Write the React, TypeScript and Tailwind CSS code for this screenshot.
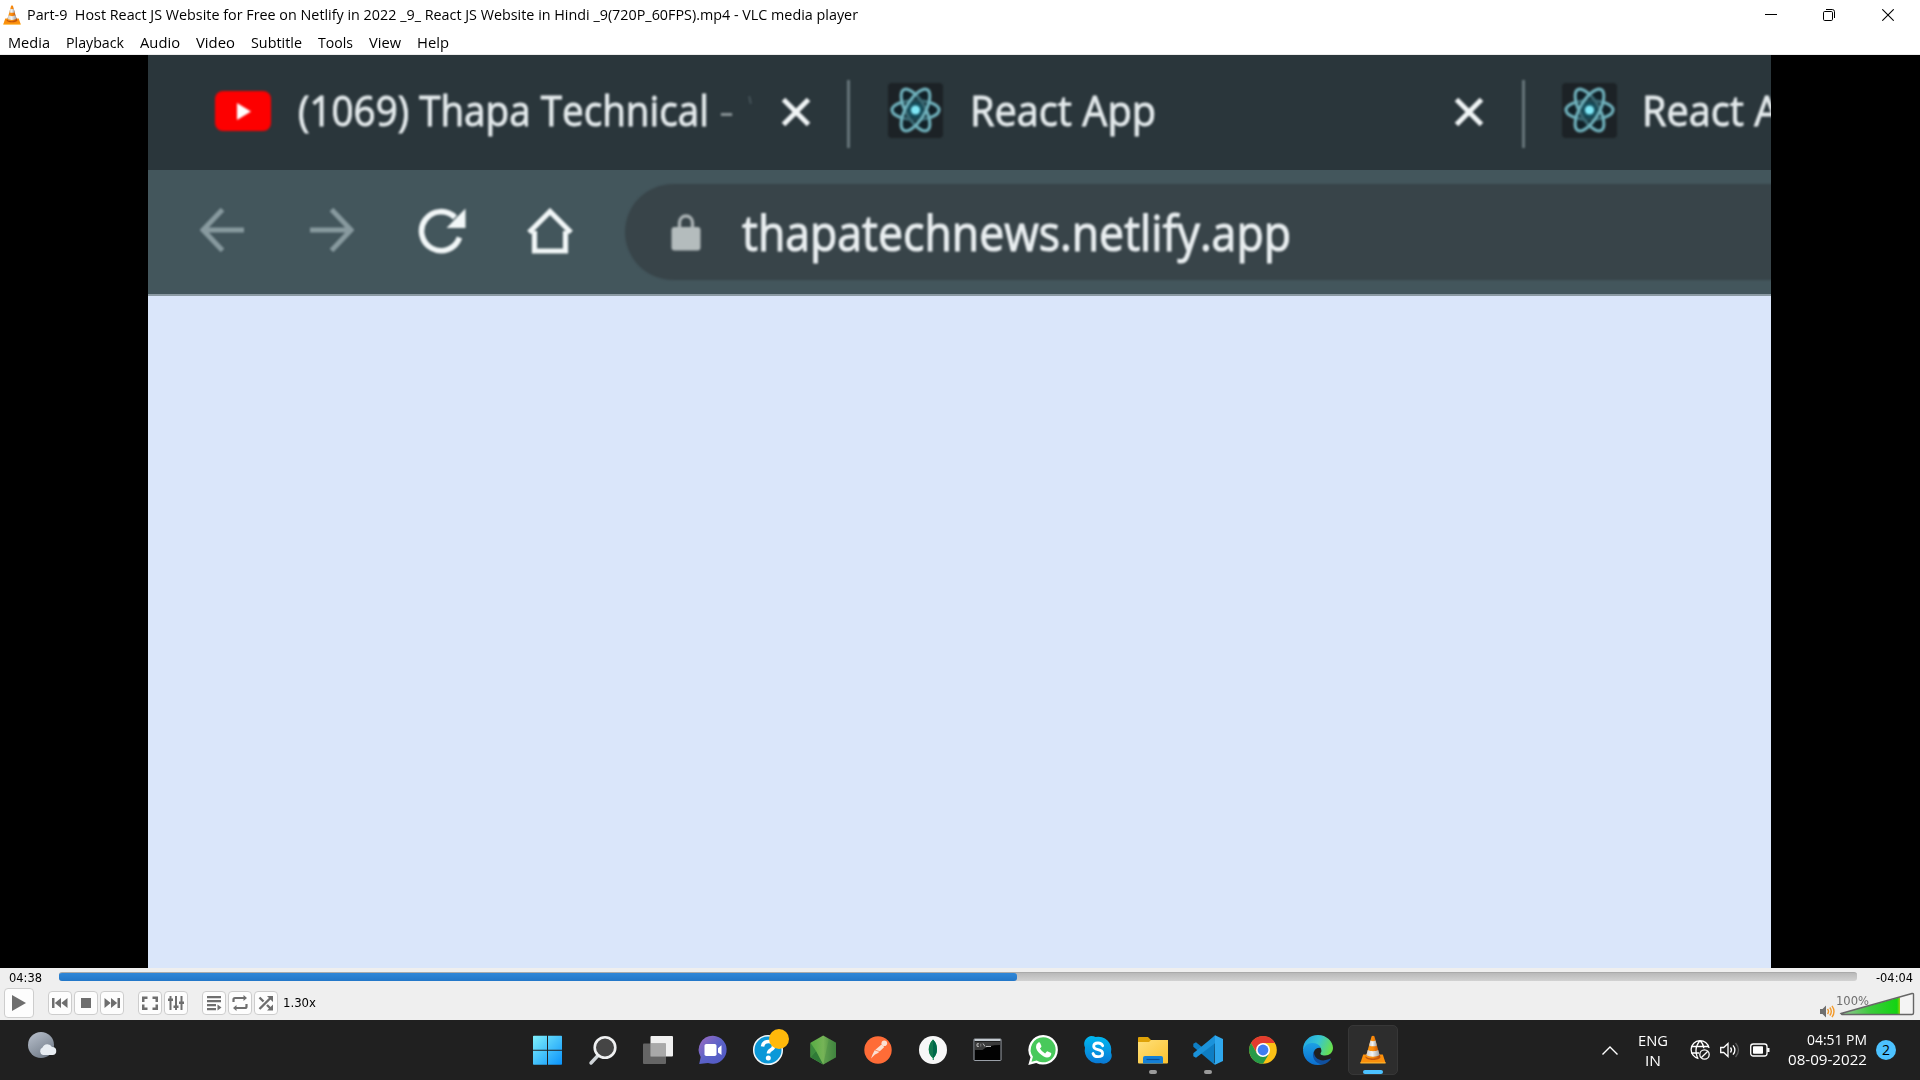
import { useLayoutEffect, useRef, useState, type ReactNode } from "react";
import clsx from "clsx";

/** One line of text, stretched horizontally to fill the given width. */
function Fit({ w, className, children }: { w: number; className?: string; children: ReactNode }) {
  const ref = useRef<HTMLSpanElement>(null);
  const [scale, setScale] = useState(1);
  useLayoutEffect(() => {
    if (ref.current && ref.current.offsetWidth > 0) {
      ref.current.style.transform = "none";
      const natural = ref.current.getBoundingClientRect().width;
      setScale(w / natural);
      ref.current.style.transform = `scaleX(${w / natural})`;
    }
  }, [w]);
  return (
    <span className={clsx("block shrink-0", className)} style={{ width: w }}>
      <span ref={ref} className="inline-block origin-left whitespace-pre" style={{ transform: `scaleX(${scale})` }}>
        {children}
      </span>
    </span>
  );
}

function Cone({ className, id }: { className?: string; id: string }) {
  return (
    <svg viewBox="0 0 26 29" className={className}>
      <defs>
        <linearGradient id={id + "o"} x1="0" x2="1">
          <stop offset="0" stopColor="#f79a1c" />
          <stop offset=".5" stopColor="#fb8b0c" />
          <stop offset="1" stopColor="#b94a05" />
        </linearGradient>
        <linearGradient id={id + "w"} x1="0" x2="1">
          <stop offset="0" stopColor="#c9c9c9" />
          <stop offset=".45" stopColor="#f4f4f4" />
          <stop offset="1" stopColor="#9c9c9c" />
        </linearGradient>
      </defs>
      <path d="M3.2 19.5h19.6L25.6 28H.4z" fill="#fb8f0b" />
      <path d="M.4 27.3h25.2v1.2H.4z" fill="#ffb52e" />
      <path d="M5.5 22c0 4 15 4 15 0l-1.3-3H6.8z" fill="#c4560a" />
      <path d="M11.6 1.3c.5-.8 2.3-.8 2.8 0L20 21.5c-1 2.6-13 2.6-14 0z" fill={`url(#${id}o)`} />
      <path d="M10.4 5.6c1.5.8 3.7.8 5.2 0l1.3 4.8c-2 1.2-5.8 1.2-7.8 0z" fill={`url(#${id}w)`} />
      <path d="M7.8 15c2.6 1.6 7.8 1.6 10.4 0l1.4 5c-2.8 2.2-10.4 2.2-13.2 0z" fill={`url(#${id}w)`} />
    </svg>
  );
}

function TitleBar() {
  return (
    <div className="flex h-[29px] shrink-0 items-center pl-[3px] text-[15px] leading-[28px]">
      <Cone id="t" className="h-[20px] w-[18px] shrink-0" />
      <Fit w={831} className="ml-[6px] h-[29px]">
        {"Part-9  Host React JS Website for Free on Netlify in 2022 _9_ React JS Website in Hindi _9(720P_60FPS).mp4 - VLC media player"}
      </Fit>
      <div className="ml-auto flex items-center">
        <svg viewBox="0 0 12 12" className="mr-[46px] h-3 w-3">
          <path d="M0 5.5h12" stroke="#000" />
        </svg>
        <svg viewBox="0 0 12 12" className="mr-[47px] h-3 w-3" fill="none" stroke="#000">
          <rect x=".5" y="2.5" width="9" height="9" rx="1.2" />
          <path d="M3 .5h6.3a2.2 2.2 0 0 1 2.2 2.2V9" />
        </svg>
        <svg viewBox="0 0 12 12" className="mr-[26px] h-3 w-3" fill="none" stroke="#000" strokeWidth="1.1">
          <path d="M.3.3l11.4 11.4M11.7.3L.3 11.7" />
        </svg>
      </div>
    </div>
  );
}

const menus: [string, number][] = [
  ["Media", 42],
  ["Playback", 58],
  ["Audio", 40],
  ["Video", 39],
  ["Subtitle", 51],
  ["Tools", 35],
  ["View", 32],
  ["Help", 32],
];

function MenuBar() {
  return (
    <div className="flex h-[26px] shrink-0 gap-4 border-b border-[#ececec] pl-[7.500px] text-[15px] leading-[26px]">
      {menus.map(([m, w]) => (
        <Fit key={m} w={w}>
          {m}
        </Fit>
      ))}
    </div>
  );
}

function ReactLogo() {
  return (
    <svg viewBox="0 0 55 55" className="h-[55px] w-[55px] shrink-0">
      <rect width="55" height="55" rx="4" fill="#1c2226" />
      <g fill="#06202a" fillOpacity=".5" stroke="#6fb0bb" strokeWidth="3.200">
        <ellipse cx="27.5" cy="27" rx="23.5" ry="9.5" />
        <ellipse cx="27.5" cy="27" rx="23.5" ry="9.5" transform="rotate(60 27.5 27)" />
        <ellipse cx="27.5" cy="27" rx="23.5" ry="9.5" transform="rotate(120 27.5 27)" />
      </g>
      <circle cx="27.5" cy="27" r="8" fill="#17505e" />
      <circle cx="27.5" cy="27" r="4.6" fill="#7fe6f5" />
    </svg>
  );
}

function CloseX({ className }: { className?: string }) {
  return (
    <svg viewBox="0 0 30 30" className={clsx("mt-[3px] h-[30px] w-[30px] shrink-0", className)} stroke="#f1f5f6" strokeWidth="5">
      <path d="M2.5 2.5l25 25M27.5 2.5l-25 25" />
    </svg>
  );
}

function Video() {
  return (
    <div className="flex h-[913px] shrink-0 justify-center bg-black pl-[148px] pr-[149px]">
      <div className="flex w-[1623px] flex-col overflow-hidden bg-[#dae6fa]">
        <div className="flex h-[115px] shrink-0 items-center overflow-hidden bg-[#2a363b] pb-1 text-[42px] leading-none text-[#e4eaec]">
          <div className="flex w-full items-center blur-[1px] [-webkit-text-stroke:0.9px_#e4eaec]">
            <svg viewBox="0 0 56 40" className="ml-[67px] h-10 w-14 shrink-0">
              <rect width="56" height="40" rx="8" fill="#fd0000" />
              <path d="M22 12l14 8.5L22 29z" fill="#fff" />
            </svg>
            <Fit w={411} className="mb-[2px] ml-[27px]">
              (1069) Thapa Technical
            </Fit>
            <Fit w={15} className="mb-[2px] ml-[10px] text-[#869094] [-webkit-text-stroke:0px]">
              -
            </Fit>
            <span className="-mt-[22px] ml-[15px] h-[8px] w-[2px] shrink-0 -rotate-12 bg-[#46545a]" />
            <CloseX className="ml-[30px]" />
            <span className="ml-[36px] mt-[7px] h-[68px] w-[3px] shrink-0 bg-[#66757a]" />
            <div className="ml-[38px]">
              <ReactLogo />
            </div>
            <Fit w={186} className="mb-[2px] ml-[27px]">
              React App
            </Fit>
            <CloseX className="ml-[298px]" />
            <span className="ml-[38px] mt-[7px] h-[68px] w-[3px] shrink-0 bg-[#66757a]" />
            <div className="ml-[37px]">
              <ReactLogo />
            </div>
            <Fit w={186} className="mb-[2px] ml-[25px]">
              React App
            </Fit>
          </div>
        </div>
        <div className="flex h-[126px] shrink-0 items-center overflow-hidden border-b-2 border-[#8b9aa3] bg-[#43565c] pb-[1px]">
          <div className="flex w-full items-center blur-[1px]">
            <svg viewBox="0 0 44 44" className="mb-1 ml-[52px] h-11 w-11 shrink-0" fill="none" stroke="#889a9f" strokeWidth="5">
              <path d="M44 22H3M22.5 1.5L3 22l19.5 20.5" />
            </svg>
            <svg viewBox="0 0 44 44" className="mb-1 ml-[66px] h-11 w-11 shrink-0" fill="none" stroke="#889a9f" strokeWidth="5">
              <path d="M0 22h41M21.5 1.5L41 22 21.5 42.5" />
            </svg>
            <svg viewBox="0 0 48 46" className="mb-[2px] ml-[64px] h-[46px] w-12 shrink-0">
              <path d="M41.5 29.5A19.5 19.5 0 1 1 37 9.5" fill="none" stroke="#f2f7f8" strokeWidth="5.6" />
              <path d="M47.5.5V20H28.5z" fill="#f2f7f8" />
            </svg>
            <svg viewBox="0 0 46 46" className="mb-[2px] ml-[61px] h-[46px] w-[46px] shrink-0" fill="none" stroke="#f2f7f8" strokeWidth="5.2">
              <path d="M2 24.5L23 3.5l21 21M7.500 23v20h31V23" />
            </svg>
            <div className="-mr-4 ml-[52px] flex h-24 grow items-center rounded-l-full bg-[#384449]">
              <svg viewBox="0 0 30 38" className="ml-[46px] h-[38px] w-[30px] shrink-0">
                <path d="M8.5 16V9.500a6.500 6.500 0 0 1 13 0V16" fill="none" stroke="#a9b1b3" strokeWidth="3.4" />
                <rect x=".5" y="14" width="29" height="23.5" rx="3" fill="#b4bcbd" />
              </svg>
              <Fit w={549} className="ml-[41px] text-[50px] leading-none text-[#e9eef0] [-webkit-text-stroke:1.1px_#e9eef0]">
                thapatechnews.netlify.app
              </Fit>
            </div>
          </div>
        </div>
      </div>
    </div>
  );
}

function Btn({ children, className }: { children: ReactNode; className?: string }) {
  return (
    <div className={clsx("flex h-6 w-6 shrink-0 items-center justify-center rounded-[4px] border border-[#cdcdcd] bg-[#fdfdfd]", className)}>
      <svg viewBox="0 0 16 16" className="h-4 w-4 shrink-0" fill="#6e6e6e">
        {children}
      </svg>
    </div>
  );
}

function Controls() {
  return (
    <div className="flex h-[52px] shrink-0 flex-col bg-[#efefef] font-['DejaVu_Sans',sans-serif] text-[12.5px]">
      <div className="flex h-[18px] pl-[9px] leading-[19px]">
        <Fit w={33}>04:38</Fit>
        <div className="ml-[17px] mt-1 h-[9px] w-[1798px] shrink-0 overflow-hidden rounded-[3px] border-t border-[#aaa] bg-gradient-to-b from-[#b9b9b9] to-[#d2d2d2]">
          <div className="h-full w-[958px] rounded-r-[3px] bg-gradient-to-b from-[#2f87d8] to-[#2377c8]" />
        </div>
        <Fit w={37} className="ml-[19px]">
          -04:04
        </Fit>
      </div>
      <div className="flex h-[34px] items-center pl-1">
        <div className="flex h-[30px] w-[30px] items-center justify-center rounded-[4px] border border-[#cdcdcd] bg-[#fdfdfd]">
          <svg viewBox="0 0 14 16" className="h-4 w-[14px]">
            <path d="M0 0l14 8-14 8z" fill="#6e6e6e" />
          </svg>
        </div>
        <div className="ml-[14px] flex gap-[2px]">
          <Btn>
            <path d="M0 3h2.5v10H0zM9 3v10L2.8 8zM15.5 3v10L9.3 8z" />
          </Btn>
          <Btn>
            <path d="M3 3h10v10H3z" />
          </Btn>
          <Btn>
            <path d="M16 3h-2.5v10H16zM7 3v10l6.2-5zM.5 3v10L6.7 8z" />
          </Btn>
        </div>
        <div className="ml-[14px] flex gap-[2px]">
          <Btn>
            <path d="M0 1.500h5.500v2.500H2.500v3H0zM16 1.500h-5.500v2.500h3v3H16zM0 15h5.500v-2.500H2.500v-3H0zM16 15h-5.500v-2.500h3v-3H16z" />
          </Btn>
          <Btn>
            <path d="M1.5 1h2v14h-2zM0 3.500h5v2.500H0zM7 1h2v14H7zM5.500 10.500h5v2.500h-5zM12.500 1h2v14h-2zM11 6.500h5v2.500h-5z" />
          </Btn>
        </div>
        <div className="ml-[14px] flex gap-[2px]">
          <Btn>
            <path d="M1 1h14v2.200H1zM1 5h14v2.200H1zM1 9h9v2.200H1zM1 13h9v2.200H1zM11.500 9.500l4 3-4 3z" />
          </Btn>
          <Btn>
            <path d="M1.5 7V4.500Q1.500 3 3 3h9.500M14.500 9v2.500q0 1.500-1.500 1.500H3.500" fill="none" stroke="#6e6e6e" strokeWidth="2.200" />
            <path d="M11.500 0l3.500 3-3.500 3zM4.500 10L1 13l3.500 3z" />
          </Btn>
          <Btn>
            <path d="M1.500 14L13 2.500M1.500 2.500l4 4M9 10l4 4" fill="none" stroke="#6e6e6e" strokeWidth="2.400" />
            <path d="M9 1h6v6zM15 9.500v6H9z" />
          </Btn>
        </div>
        <Fit w={33} className="ml-[5px] mt-[1px] leading-none">
          1.30x
        </Fit>
        <div className="ml-auto mr-[5px] flex items-end">
          <svg viewBox="0 0 15 13" className="mb-[-2px] h-[13px] w-[15px]">
            <path d="M0 4h2.5L6 .5v12L2.500 9H0z" fill="#6e6e6e" />
            <path d="M7.500 4q2 2.500 0 5M9.800 2.500q3 4 0 8M12 .8q4 5.700 0 11.400" fill="none" stroke="#f39a2b" strokeWidth="1.400" />
          </svg>
          <div className="relative mt-[2px] h-[24px] w-[80px]">
            <svg viewBox="0 0 80 24" className="h-[24px] w-[80px]">
              <defs>
                <linearGradient id="vol" x1="0" x2="1">
                  <stop offset="0" stopColor="#9bc39b" />
                  <stop offset=".5" stopColor="#3ccb3c" />
                  <stop offset=".95" stopColor="#12d412" />
                  <stop offset="1" stopColor="#9bd010" />
                </linearGradient>
              </defs>
              <path d="M6 21.5L78.5 1.500V22.500H6z" fill="#f4f4f4" />
              <path d="M6 21.5L65 5.300V22.500H6z" fill="url(#vol)" />
              <path d="M6 21.5L77 1.500q1.500-.3 1.500 1V21q0 1.500-1.500 1.500H7z" fill="none" stroke="#666" strokeWidth="1.400" />
            </svg>
            <Fit w={33} className="absolute left-[1px] top-[2px] leading-[14px] text-[#6e6e6e]">
              100%
            </Fit>
          </div>
        </div>
      </div>
    </div>
  );
}

function TaskIcon({ children, running }: { children: ReactNode; running?: boolean }) {
  return (
    <div className="flex h-[60px] w-[55px] shrink-0 flex-col items-center pt-[15px]">
      <svg viewBox="0 0 30 30" className="h-[30px] w-[30px] shrink-0 overflow-visible">
        {children}
      </svg>
      {running && <span className="mt-[5px] h-1 w-2 rounded-full bg-[#9a9a9a]" />}
    </div>
  );
}

function Taskbar() {
  return (
    <div className="flex h-[60px] shrink-0 items-start bg-[#202020] text-white">
      <svg viewBox="0 0 30 28" className="ml-[27px] mt-[11px] h-7 w-[30px] shrink-0">
        <defs>
          <linearGradient id="moon" x1=".2" x2=".8" y1="0" y2="1">
            <stop offset="0" stopColor="#b4bcc8" />
            <stop offset="1" stopColor="#6f7986" />
          </linearGradient>
        </defs>
        <circle cx="14" cy="14" r="13" fill="url(#moon)" />
        <path d="M16 24a4 4 0 0 1-.5-7.500 5.200 5.200 0 0 1 9.500-.5 4 4 0 0 1 .5 8z" fill="#e8edf2" />
      </svg>
      <div className="ml-[463px] flex">
        <TaskIcon>
          <defs>
            <linearGradient id="win" x1="0" x2="1" y1="0" y2="1">
              <stop offset="0" stopColor="#7ff0fb" />
              <stop offset="1" stopColor="#0a93fb" />
            </linearGradient>
          </defs>
          <path d="M0 1.500q0-.8.8-.8H14v14H0zM15 .7h13.200q.8 0 .8.8v13.200H15zM0 15.700h14v14H.8q-.8 0-.8-.8zM15 15.700h14v13.200q0 .8-.8.8H15z" fill="url(#win)" />
        </TaskIcon>
        <TaskIcon>
          <path d="M10 20.500L3 28" stroke="#cfd4d8" strokeWidth="3.400" strokeLinecap="round" />
          <circle cx="17" cy="12.500" r="10.300" fill="#454545" stroke="#f0f1f2" strokeWidth="2.600" />
        </TaskIcon>
        <TaskIcon>
          <rect x="7.500" y="1" width="22.500" height="20.500" rx="1" fill="#f0f0f0" />
          <rect x="0" y="8.500" width="23" height="20.500" rx="1" fill="#6b6b6b" fillOpacity=".92" />
          <rect x="7.500" y="8.500" width="15.500" height="13" fill="#a9a9a9" />
        </TaskIcon>
        <TaskIcon>
          <defs>
            <linearGradient id="chat" x1="0" x2="1" y1="0" y2="1">
              <stop offset="0" stopColor="#a06bc0" />
              <stop offset=".5" stopColor="#5b62c8" />
              <stop offset="1" stopColor="#5058c4" />
            </linearGradient>
          </defs>
          <path d="M15 .8a14 14 0 1 1-5 27.200l-8.800 1 1.500-7A14 14 0 0 1 15 .8z" fill="url(#chat)" />
          <rect x="6.500" y="9" width="12" height="12" rx="1.800" fill="#fff" />
          <path d="M20 13.200l3.500-3V20L20 17.500z" fill="#fff" />
        </TaskIcon>
        <TaskIcon>
          <circle cx="15" cy="15" r="14.300" fill="#0b98d8" stroke="#f3f7f9" strokeWidth="1.500" />
          <path d="M9.500 11.500q.8-5 6-5t5.200 4.300q0 2.500-3 4.200-2.200 1.300-2.200 3.500" fill="none" stroke="#fff" strokeWidth="3.600" />
          <circle cx="15.300" cy="23" r="2.500" fill="#fff" />
          <circle cx="26" cy="4" r="10" fill="#ffb90b" />
        </TaskIcon>
        <TaskIcon>
          <defs>
            <linearGradient id="node" x1="0" x2="1">
              <stop offset="0" stopColor="#57ad43" />
              <stop offset=".5" stopColor="#76b457" />
              <stop offset="1" stopColor="#367d38" />
            </linearGradient>
          </defs>
          <path d="M15.200.5L28 7.800v14.400L15.200 29.500 2.500 22.200V7.800z" fill="url(#node)" />
          <path d="M2.500 7.800L8 16l-5.500 6.200z" fill="#3c8a3e" />
          <path d="M2.500 22.200L8 16l7.200 13.500z" fill="#2f7a37" />
          <path d="M21 3.800L28 7.800v14.400L15.200 29.500z" fill="#4a8b45" fillOpacity=".5" />
        </TaskIcon>
        <TaskIcon>
          <circle cx="15" cy="15" r="13.700" fill="#ff6c37" />
          <circle cx="21.300" cy="8.300" r="2.800" fill="#fbe0d4" />
          <path d="M18.500 9.500l2.800 2.500-6.300 6-3 1.500-4 4 1.500-4 2-4z" fill="#fbe0d4" />
          <path d="M12 15l5 1.800" stroke="#ff6c37" strokeWidth=".7" />
        </TaskIcon>
        <TaskIcon>
          <circle cx="15" cy="15" r="14" fill="#f7f7f7" />
          <path d="M15 4.500q4 4 4 9.500t-3.500 9v2h-.8v-2Q10.800 20 10.800 14.500 10.800 8.800 15 4.500z" fill="#10aa50" />
          <path d="M15 4.500q4 4 4 9.500t-3.500 9v2H15z" fill="#00684a" />
          <path d="M15 4.500Q10.800 8.800 10.800 14.500q0 5.500 4.200 8.500z" fill="#12794f" />
        </TaskIcon>
        <TaskIcon>
          <rect x="1" y="4" width="27" height="21.500" rx=".5" fill="#020202" stroke="#9aa0a8" />
          <path d="M1.500 4h26v2h-26z" fill="#c3c9cf" />
          <path d="M2 6.500h25V10Q14.500 10 9.500 15H2z" fill="#3a3a3a" />
          <path d="M4 8.800h2M4 8.800v2.500h2M7.800 8.800v.8M7.800 10.500v.8M10 8.500l2 3M13 11.500h5" stroke="#ddd" strokeWidth=".8" fill="none" />
        </TaskIcon>
        <TaskIcon>
          <path d="M15.200 0a14.800 14.800 0 1 1-7 27.900L.3 30l2.200-7.700A14.800 14.800 0 0 1 15.200 0z" fill="#fff" />
          <path d="M15.200 2.300a12.500 12.500 0 1 1-6.500 23.200L3.500 26.800l1.400-5A12.500 12.500 0 0 1 15.200 2.300z" fill="#48c95b" />
          <path d="M10.300 7.500q1.300-.6 1.800.5l1.300 3q.2.600-.3 1.200l-1.200 1.400q2 3.500 5.200 4.800l1.500-1.700q.5-.6 1.200-.3l2.900 1.400q.7.400.6 1-.4 3.600-4.300 3.600-3 0-7-3.600T8 12q-.2-3 2.300-4.500z" fill="#fff" />
        </TaskIcon>
        <TaskIcon>
          <defs>
            <linearGradient id="sky" x1="0" x2="0" y1="0" y2="1">
              <stop offset="0" stopColor="#00b8f0" />
              <stop offset="1" stopColor="#0a78d4" />
            </linearGradient>
          </defs>
          <path d="M8 1q3 0 4.500 1A13 13 0 0 1 28 17.500 8 8 0 0 1 17.500 28 13 13 0 0 1 2 12.500 8 8 0 0 1 8 1z" fill="url(#sky)" />
          <path d="M19.700 10.700q-1.200-2.700-4.700-2.700-4.300 0-4.300 3.300 0 2.500 4.300 3.400 4.600.9 4.600 3.800 0 3.200-4.600 3.200-4 0-5-3.200" fill="none" stroke="#fff" strokeWidth="2.800" strokeLinecap="round" />
        </TaskIcon>
        <TaskIcon running>
          <defs>
            <linearGradient id="fold" x1="0" x2="1" y1="0" y2="1">
              <stop offset="0" stopColor="#ffe07a" />
              <stop offset="1" stopColor="#fcc22f" />
            </linearGradient>
          </defs>
          <path d="M0 3q0-1 1-1h9l3 3h16q1 0 1 1v4H0z" fill="#dfa207" />
          <path d="M0 7h11l2-2h17v22.500q0 1-1 1H1q-1 0-1-1z" fill="url(#fold)" />
          <path d="M5 28.500V23q0-2 2-2h16q2 0 2 2v5.500z" fill="#1580d6" />
          <path d="M8.500 24.500h13" stroke="#0b4f96" strokeWidth="1.200" />
        </TaskIcon>
        <TaskIcon running>
          <path d="M22 .3L9.500 12.600 3 7.300.3 8.800v3L21.500 29.700V21z" fill="#0e7ec4" />
          <path d="M.3 18.200v3L3 22.800 22.300 8V.3z" fill="#1b92da" />
          <path d="M22 .3l8 3.700v22l-8 3.800-1-1 1-1z" fill="#2fa8ee" />
        </TaskIcon>
        <TaskIcon>
          <circle cx="15" cy="15" r="13.800" fill="#fbc116" />
          <path d="M3 8.100A13.800 13.800 0 0 1 27 8.100H15z" fill="#e33b2e" />
          <path d="M3 8.100L9.500 19 15 8z" fill="#e33b2e" />
          <path d="M3 8.100A13.800 13.800 0 0 0 15 28.800l5.500-9L9 18.500z" fill="#269a48" />
          <circle cx="15" cy="15" r="7" fill="#fff" />
          <circle cx="15" cy="15" r="5.400" fill="#3f7df0" />
        </TaskIcon>
        <TaskIcon>
          <defs>
            <linearGradient id="ed1" x1="0" x2="1" y1=".2" y2=".5">
              <stop offset="0" stopColor="#1fa6e4" />
              <stop offset=".5" stopColor="#37c5d3" />
              <stop offset="1" stopColor="#68e04c" />
            </linearGradient>
            <linearGradient id="ed2" x1="0" x2="0" y1="0" y2="1">
              <stop offset="0" stopColor="#1ca0e4" />
              <stop offset="1" stopColor="#0b6fd0" />
            </linearGradient>
          </defs>
          <path d="M0 15C0 6 6.500 0 15 0s15 6.500 15 13c0 4.500-3.500 7.500-8 7.500-3.500 0-5.500-1.300-4-3 .8-1 .8-5-3-7Q8 7.500 0 15z" fill="url(#ed1)" />
          <path d="M0 15Q3 7.500 9.500 8q6 0 8.500 5-5-1-7 3.500c-2 5.500 3 11.500 9 12.800C9 32.500 0 25 0 15z" fill="url(#ed2)" />
          <path d="M11.300 15.500c-1.800 6 5 11.500 11.500 9.500q3.500-1 4.700-1.500.8-.2.200.8-2.700 4-7.700 5.200C12 29.500 7.500 21 11.300 15.500z" fill="#10509f" />
        </TaskIcon>
        <div className="flex h-[60px] w-[55px] items-start justify-center pt-[5px]">
          <div className="flex h-[50px] w-[50px] flex-col items-center rounded-[5px] border border-[#373737] bg-[#2d2d2d] pt-[9px]">
            <Cone id="v" className="h-[29px] w-[26px] shrink-0" />
            <span className="mt-[6px] h-1 w-5 shrink-0 rounded-full bg-[#4cc2ff]" />
          </div>
        </div>
      </div>
      <svg viewBox="0 0 16 9" className="ml-[202px] mt-[26px] h-[9px] w-4 shrink-0" fill="none" stroke="#fff" strokeWidth="1.400">
        <path d="M.5 8.500L8 1l7.500 7.500" />
      </svg>
      <div className="ml-5 mt-[10px] flex w-[30px] shrink-0 flex-col items-center text-[15px] leading-5">
        <Fit w={30}>ENG</Fit>
        <Fit w={16}>IN</Fit>
      </div>
      <div className="ml-[22px] mt-5 flex shrink-0 gap-[10px]">
        <svg viewBox="0 0 20 20" className="h-5 w-5" fill="none" stroke="#fff" strokeWidth="1.300">
          <path d="M19 8A9 9 0 1 0 8.500 18.500M1.500 6.500h17M1 13h8M10 .8Q3.500 8 7.500 18M10 .8q3.500 3 3.800 7.500" />
          <circle cx="14.500" cy="14.500" r="4.700" />
          <path d="M11.200 17.800l6.600-6.600" />
        </svg>
        <svg viewBox="0 0 20 20" className="h-5 w-5" fill="none" stroke="#fff" strokeWidth="1.300">
          <path d="M.7 7.500h3L8 3.500v13l-4.300-4h-3zM10.500 7.500q2 2.500 0 5M13 5.300q3.800 4.700 0 9.400" />
          <path d="M15.500 3q6 7 0 14" stroke="#5b5b5b" />
        </svg>
        <svg viewBox="0 0 20 20" className="h-5 w-5" fill="none" stroke="#fff" strokeWidth="1.300">
          <rect x=".7" y="4" width="16.300" height="12" rx="2.500" />
          <rect x="3" y="6.300" width="10" height="7.400" rx=".8" fill="#fff" stroke="none" />
          <path d="M18.300 8v4" strokeWidth="2.400" />
        </svg>
      </div>
      <div className="ml-[17px] mt-[9px] flex w-[80px] shrink-0 flex-col items-end text-[15px] leading-5">
        <Fit w={60}>04:51 PM</Fit>
        <Fit w={79}>08-09-2022</Fit>
      </div>
      <div className="ml-[9px] mt-5 flex h-5 w-5 shrink-0 items-center justify-center rounded-full bg-[#4cc2ff] text-[14px] leading-none text-black">
        2
      </div>
    </div>
  );
}

export default function App() {
  return (
    <div className="flex h-[1080px] w-[1920px] flex-col overflow-hidden bg-white font-['Open_Sans','Noto_Sans',sans-serif] text-black">
      <TitleBar />
      <MenuBar />
      <Video />
      <Controls />
      <Taskbar />
    </div>
  );
}
